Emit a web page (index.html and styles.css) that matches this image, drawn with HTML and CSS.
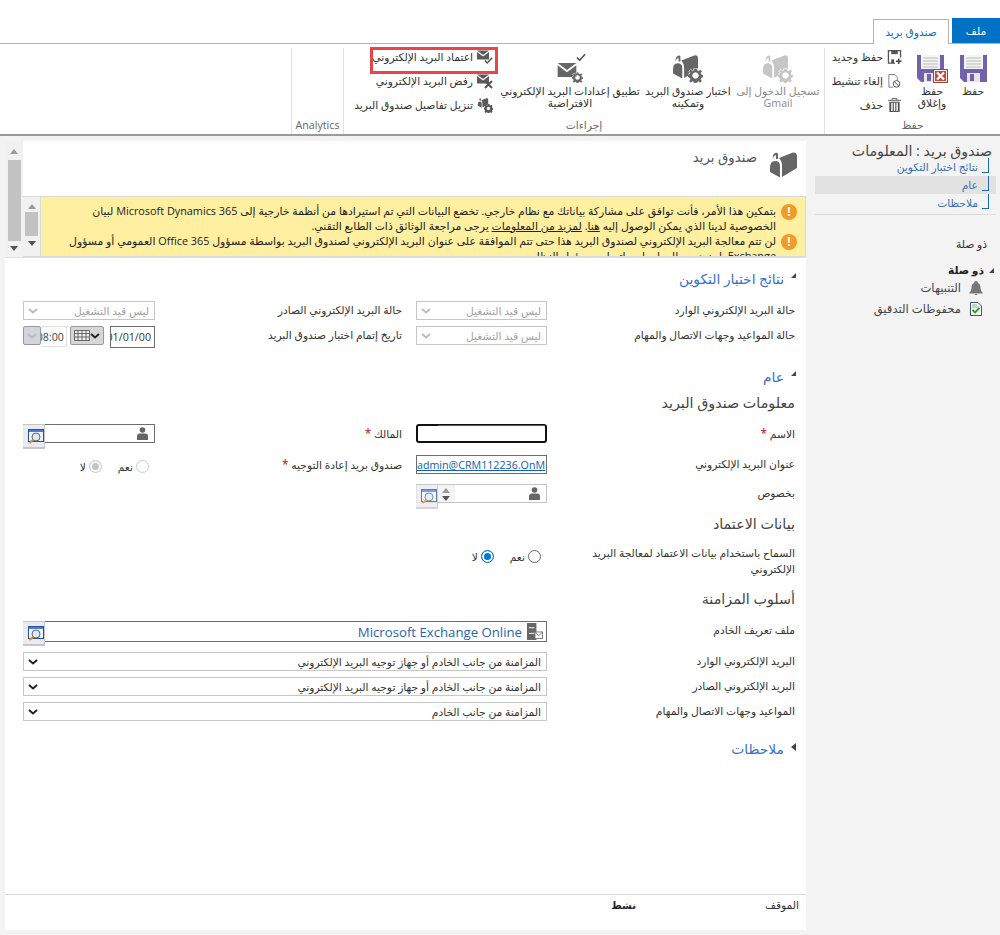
FILE: index.html
```html
<!DOCTYPE html>
<html lang="ar" dir="rtl">
<head>
    <meta charset="UTF-8">
    <title>صندوق بريد</title>
    <link rel="stylesheet" href="styles.css">
</head>
<body>
    <svg class="defs" width="0" height="0">
        <symbol id="mailbox" viewBox="0 0 27 26">
            <path d="M9 6 L23 .5 Q27 0 27 4 V16 L12 25 V14 Q12 9 9 6z"/>
            <path d="M0 16 Q0 9 5 9 Q10 9 10 14 V25.500 L0 20z"/>
            <path d="M5 1 Q8 0 8 2 V7 H6 V3 Q3 4 3 7 Q2 3 5 1z"/>
        </symbol>
        <symbol id="gear" viewBox="0 0 16 16">
            <path d="M6.500 0h3l.4 2.200 1.400.6L13.200 1.500l2 2-1.300 1.900.6 1.400 2.200.4v3l-2.200.4-.6 1.400 1.300 1.900-2 2-1.900-1.300-1.400.6-.4 2.200h-3l-.4-2.200-1.400-.6-1.900 1.300-2-2 1.300-1.900-.6-1.400L-.700 9.700v-3l2.200-.4.6-1.400L.800 3.500l2-2 1.900 1.300 1.400-.6z M8 5a3 3 0 1 0 .01 0z" fill-rule="evenodd"/>
        </symbol>
        <symbol id="floppy" viewBox="0 0 27 27">
            <path d="M0 0H27V27H4L0 23z" fill="#7262ac"/>
            <rect x="4" y="0" width="19" height="14" fill="#f4f4f4"/>
            <path d="M6 3h15M6 6h15M6 9h15M6 12h15" stroke="#bbb"/>
            <rect x="7" y="18" width="13" height="9" fill="#e6e6e6"/>
            <rect x="10" y="19" width="4" height="7" fill="#7262ac"/>
        </symbol>
        <symbol id="lookup" viewBox="0 0 16 15">
            <rect x=".5" y=".5" width="15" height="12" fill="#eef2fa" stroke="#2c4f94"/>
            <rect x="1" y="1" width="14" height="2" fill="#4a7bd8"/>
            <circle cx="8" cy="8" r="4" fill="#dfeaf4" stroke="#5b6b76"/>
            <path d="M5.500 10.500 L1.500 14" stroke="#d9902a" stroke-width="2"/>
        </symbol>
        <symbol id="person" viewBox="0 0 11 13">
            <circle cx="5.500" cy="3" r="2.800"/>
            <path d="M0 13V9Q0 6.500 3 6.500H8Q11 6.500 11 9V13z"/>
        </symbol>
        <symbol id="chev" viewBox="0 0 10 6">
            <path d="M1 1 L5 4.500 L9 1" fill="none" stroke="currentColor" stroke-width="2"/>
        </symbol>
        <symbol id="envelope" viewBox="0 0 16 12">
            <path d="M0 0H16L8 6z"/>
            <path d="M0 2V12H16V2L8 8z"/>
        </symbol>
    </svg>

    <header class="top">
        <div class="tabs">
            <div class="tab tab-file">ملف</div>
            <div class="tab tab-active">صندوق بريد</div>
        </div>
        <div class="ribbon">
            <section class="group group-save">
                <div class="group-body">
                    <div class="big big-save">
                        <span class="close-wrap">
                            <svg class="ico-floppy"><use href="#floppy"/></svg>
                        </span>
                        <span>حفظ</span>
                    </div>
                    <div class="big big-close">
                        <span class="close-wrap">
                            <svg class="ico-floppy"><use href="#floppy"/></svg>
                            <svg class="ico-x" viewBox="0 0 15 14"><rect x=".5" y=".5" width="14" height="13" fill="#f2f2f2" stroke="#8c4a3c"/><rect x="2" y="2" width="11" height="10" fill="#c9483a"/><path d="M4 3.500 L11 10.500 M11 3.500 L4 10.500" stroke="#fff" stroke-width="2.200"/></svg>
                        </span>
                        <span>حفظ<br>وإغلاق</span>
                    </div>
                    <div class="small-col small-col-save">
                        <div class="small">
                            <svg class="ico-small" viewBox="0 0 15 15"><path d="M8 14H1V.7H14V8" fill="none" stroke="#555" stroke-width="1.400"/><rect x="4" y="1" width="7" height="3.500" fill="#555"/><rect x="4" y="10" width="3" height="4" fill="#555"/><path d="M12 9v6M9 12h6" stroke="#444" stroke-width="1.600"/></svg>
                            <span>حفظ وجديد</span>
                        </div>
                        <div class="small">
                            <svg class="ico-small" viewBox="0 0 15 17"><path d="M6 16H.7V.700H8L11 4V8" fill="none" stroke="#666"/><circle cx="10" cy="12" r="4" fill="#fff" stroke="#555" stroke-width="1.200"/><path d="M7.500 9.500 L12.500 14.500" stroke="#555" stroke-width="1.200"/></svg>
                            <span>إلغاء تنشيط</span>
                        </div>
                        <div class="small">
                            <svg class="ico-small" viewBox="0 0 14 15"><path d="M0 2.500H14M4.500 2V.5H9.500V2" stroke="#555" fill="none"/><path d="M1.500 4H12.500V15H1.500z M3.500 5V14H5V5z M6.300 5V14H7.800V5z M9 5V14H10.500V5z" fill="#555" fill-rule="evenodd"/></svg>
                            <span>حذف</span>
                        </div>
                    </div>
                </div>
                <div class="group-name">حفظ</div>
            </section>

            <section class="group group-actions">
                <div class="group-body">
                    <div class="big big-gmail is-off">
                        <span class="mail-wrap">
                            <svg class="ico-mailbox"><use href="#mailbox"/></svg>
                            <svg class="ico-gear"><use href="#gear"/></svg>
                        </span>
                        <span>تسجيل الدخول إلى Gmail</span>
                    </div>
                    <div class="big big-test">
                        <span class="mail-wrap">
                            <svg class="ico-mailbox"><use href="#mailbox"/></svg>
                            <svg class="ico-gear"><use href="#gear"/></svg>
                        </span>
                        <span>اختبار صندوق البريد وتمكينه</span>
                    </div>
                    <div class="big big-apply">
                        <span class="apply-wrap">
                            <svg class="ico-env"><use href="#envelope"/></svg>
                            <svg class="ico-gear"><use href="#gear"/></svg>
                            <svg class="ico-tick" viewBox="0 0 11 9"><path d="M1 4.500 L4 7.500 L10 1" fill="none" stroke="#555" stroke-width="1.800"/></svg>
                        </span>
                        <span>تطبيق إعدادات البريد الإلكتروني<br>الافتراضية</span>
                    </div>
                    <div class="small-col small-col-mail">
                        <div class="small small-marked">
                            <span class="env-small">
                                <svg class="ico-small"><use href="#envelope"/></svg>
                                <svg class="ico-mini" viewBox="0 0 11 9"><path d="M1 4.500 L4 7.500 L10 1" fill="none" stroke="#555" stroke-width="1.800"/></svg>
                            </span>
                            <span>اعتماد البريد الإلكتروني</span>
                        </div>
                        <div class="small">
                            <span class="env-small">
                                <svg class="ico-small"><use href="#envelope"/></svg>
                                <svg class="ico-mini" viewBox="0 0 9 9"><path d="M1 1 L8 8 M8 1 L1 8" stroke="#555" stroke-width="2"/></svg>
                            </span>
                            <span>رفض البريد الإلكتروني</span>
                        </div>
                        <div class="small">
                            <span class="env-small">
                                <svg class="ico-small"><use href="#mailbox"/></svg>
                                <svg class="ico-mini"><use href="#gear"/></svg>
                            </span>
                            <span>تنزيل تفاصيل صندوق البريد</span>
                        </div>
                    </div>
                </div>
                <div class="group-name">إجراءات</div>
            </section>

            <section class="group group-analytics">
                <div class="group-body"></div>
                <div class="group-name">Analytics</div>
            </section>
        </div>
    </header>

    <div class="page">
        <aside class="side">
            <div class="side-title">صندوق بريد : المعلومات</div>
            <ul class="side-tree">
                <li>نتائج اختبار التكوين</li>
                <li class="current">عام</li>
                <li>ملاحظات</li>
            </ul>
            <div class="side-rule"></div>
            <div class="side-plain">ذو صلة</div>
            <div class="side-head"><i class="tri"></i>ذو صلة</div>
            <div class="side-item">
                <svg class="side-ico" viewBox="0 0 14 14"><path d="M7 0Q9 0 9 2Q11.500 3 11.500 7Q11.500 10 13.500 11.500V12.500H.5V11.500Q2.500 10 2.500 7Q2.500 3 5 2Q5 0 7 0z M5.500 13H8.500Q8 14 7 14Q6 14 5.500 13z" fill="#777"/></svg>
                <span>التنبيهات</span>
            </div>
            <div class="side-item">
                <svg class="side-ico" viewBox="0 0 14 14"><path d="M1.500.5H9L12.500 4V13.500H1.500z" fill="#fbfbf4" stroke="#3c5a78"/><path d="M3 3h5M3 5h7" stroke="#8aa"/><path d="M3.500 8 L6 10.500 L10.500 6" fill="none" stroke="#2d9a2d" stroke-width="1.800"/></svg>
                <span>محفوظات التدقيق</span>
            </div>
        </aside>

        <main class="panel">
            <div class="panel-top">
                <div class="scroll-outer">
                    <i class="arr arr-up"></i>
                    <b class="thumb thumb-outer"></b>
                    <i class="arr arr-down"></i>
                </div>
                <div class="panel-head">
                    <div class="entity">
                        <svg class="ico-entity"><use href="#mailbox"/></svg>
                        <span>صندوق بريد</span>
                    </div>
                    <div class="notice">
                        <div class="notice-text">
                            <div class="notice-item">
                                <i class="warn">!</i>
                                <p>بتمكين هذا الأمر، فأنت توافق على مشاركة بياناتك مع نظام خارجي. تخضع البيانات التي تم استيرادها من أنظمة خارجية إلى Microsoft Dynamics 365 لبيان<br>الخصوصية لدينا الذي يمكن الوصول إليه <u>هنا</u>. <u>لمزيد من المعلومات</u> يرجى مراجعة الوثائق ذات الطابع التقني.</p>
                            </div>
                            <div class="notice-item">
                                <i class="warn">!</i>
                                <p>لن تتم معالجة البريد الإلكتروني لصندوق البريد هذا حتى تتم الموافقة على عنوان البريد الإلكتروني لصندوق البريد بواسطة مسؤول Office 365 العمومي أو مسؤول<br>Exchange. لمزيد من المعلومات، اتصل بمسؤول النظام.</p>
                            </div>
                        </div>
                        <div class="scroll-inner">
                            <i class="arr arr-up"></i>
                            <b class="thumb thumb-inner"></b>
                            <i class="arr arr-down"></i>
                        </div>
                    </div>
                </div>
            </div>

            <div class="form">
                <h2 class="sec sec-test"><i class="tri"></i>نتائج اختبار التكوين</h2>
                <div class="row row-test">
                    <label>حالة البريد الإلكتروني الوارد</label>
                    <div class="ctl ctl-off"><span>ليس قيد التشغيل</span><svg class="chev"><use href="#chev"/></svg></div>
                    <label>حالة البريد الإلكتروني الصادر</label>
                    <div class="ctl ctl-off"><span>ليس قيد التشغيل</span><svg class="chev"><use href="#chev"/></svg></div>
                </div>
                <div class="row row-test">
                    <label>حالة المواعيد وجهات الاتصال والمهام</label>
                    <div class="ctl ctl-off"><span>ليس قيد التشغيل</span><svg class="chev"><use href="#chev"/></svg></div>
                    <label>تاريخ إتمام اختبار صندوق البريد</label>
                    <div class="date">
                        <div class="date-day"><span>01/01/00</span></div>
                        <div class="date-cal">
                            <svg class="chev chev-dark"><use href="#chev"/></svg>
                            <svg class="cal-ico" viewBox="0 0 16 11"><path d="M.5.5H15.500V10.500H.5z M.5 3.500H15.500M.5 7H15.500M4 .5V10.500M8 .5V10.500M12 .5V10.500" fill="#eee" stroke="#666"/></svg>
                        </div>
                        <div class="date-time"><span>08:00</span></div>
                        <div class="date-arrow"><svg class="chev"><use href="#chev"/></svg></div>
                    </div>
                </div>

                <h2 class="sec sec-general"><i class="tri"></i>عام</h2>
                <h3 class="sub sub-first">معلومات صندوق البريد</h3>
                <div class="row">
                    <label>الاسم <em>*</em></label>
                    <div class="ctl ctl-focus"></div>
                    <label>المالك <em>*</em></label>
                    <div class="ctl ctl-dark ctl-look">
                        <svg class="person"><use href="#person"/></svg>
                        <span class="look"><svg class="look-ico"><use href="#lookup"/></svg></span>
                    </div>
                </div>
                <div class="row row-mail">
                    <label>عنوان البريد الإلكتروني</label>
                    <div class="ctl ctl-dark ctl-mail"><span>admin@CRM112236.OnM</span></div>
                    <label>صندوق بريد إعادة التوجيه <em>*</em></label>
                    <div class="radios radios-off">
                        <span class="radio-opt"><i class="radio"></i>نعم</span>
                        <span class="radio-opt"><i class="radio radio-on"></i>لا</span>
                    </div>
                </div>
                <div class="row row-regard">
                    <label>بخصوص</label>
                    <div class="ctl ctl-look">
                        <svg class="person"><use href="#person"/></svg>
                        <span class="spin"><i class="arr arr-up"></i><i class="arr arr-down"></i></span>
                        <span class="look look-pale"><svg class="look-ico"><use href="#lookup"/></svg></span>
                    </div>
                </div>

                <h3 class="sub sub-cred">بيانات الاعتماد</h3>
                <div class="row row-cred">
                    <label>السماح باستخدام بيانات الاعتماد لمعالجة البريد الإلكتروني</label>
                    <div class="radios">
                        <span class="radio-opt"><i class="radio"></i>نعم</span>
                        <span class="radio-opt"><i class="radio radio-on"></i>لا</span>
                    </div>
                </div>

                <h3 class="sub sub-sync">أسلوب المزامنة</h3>
                <div class="row row-wide row-profile">
                    <label>ملف تعريف الخادم</label>
                    <div class="ctl ctl-dark ctl-profile">
                        <svg class="srv-ico" viewBox="0 0 17 18"><rect width="10" height="18" fill="#666"/><path d="M2 5h6M2 11h6" stroke="#fff"/><rect x="8.500" y="9.500" width="8" height="7" fill="#fff" stroke="#777"/><path d="M9 10 L12.500 13.500 L16 10" fill="none" stroke="#777"/></svg>
                        <span>Microsoft Exchange Online</span>
                        <span class="look"><svg class="look-ico"><use href="#lookup"/></svg></span>
                    </div>
                </div>
                <div class="row row-wide row-sync">
                    <label>البريد الإلكتروني الوارد</label>
                    <div class="ctl"><span>المزامنة من جانب الخادم أو جهاز توجيه البريد الإلكتروني</span><svg class="chev chev-dark"><use href="#chev"/></svg></div>
                </div>
                <div class="row row-wide row-sync">
                    <label>البريد الإلكتروني الصادر</label>
                    <div class="ctl"><span>المزامنة من جانب الخادم أو جهاز توجيه البريد الإلكتروني</span><svg class="chev chev-dark"><use href="#chev"/></svg></div>
                </div>
                <div class="row row-wide row-sync">
                    <label>المواعيد وجهات الاتصال والمهام</label>
                    <div class="ctl"><span>المزامنة من جانب الخادم</span><svg class="chev chev-dark"><use href="#chev"/></svg></div>
                </div>

                <h2 class="sec sec-notes"><i class="tri tri-closed"></i>ملاحظات</h2>
            </div>

            <footer class="status">
                <span class="status-label">الموقف</span>
                <span class="status-value">نشط</span>
            </footer>
        </main>
    </div>
</body>
</html>
```

FILE: styles.css
```css
* {
    box-sizing: border-box;
}

html, body {
    margin: 0;
    height: 100%;
}

body {
    width: 1000px;
    height: 935px;
    overflow: hidden;
    display: flex;
    flex-direction: column;
    background: #f3f3f3;
    color: #333;
    font-family: "Open Sans", "DejaVu Sans", sans-serif;
    font-size: 10.700px;
    direction: rtl;
}

.defs {
    position: absolute;
}

/* ribbon */
.top {
    background: #fff;
    height: 136px;
    flex: none;
}

.tabs {
    height: 44px;
    padding-top: 19px;
    display: flex;
    align-items: flex-end;
    gap: 3px;
    border-bottom: 1px solid #b4b4b4;
}

.tab {
    height: 25px;
    display: flex;
    align-items: center;
    justify-content: center;
}

.tab-file {
    width: 48px;
    background: #0072c6;
    color: #fff;
}

.tab-active {
    width: 76px;
    height: 25px;
    margin-bottom: -1px;
    background: #fff;
    color: #0072c6;
    border: 1px solid #b4b4b4;
    border-bottom: 0;
}

.ribbon {
    height: 92px;
    display: flex;
    border-bottom: 2px solid #9a9a9a;
}

.group {
    position: relative;
    display: flex;
    flex-direction: column;
    height: 86px;
    margin-top: 4px;
    border-left: 1px solid #e2e2e2;
}

.group-save {
    width: 176px;
}

.group-actions {
    width: 481px;
}

.group-analytics {
    width: 52px;
}

.group-body {
    flex: 1;
    min-height: 0;
    display: flex;
    align-items: flex-start;
}

.group-name {
    height: 17px;
    text-align: center;
    color: #666;
    line-height: 16px;
}

.big {
    display: flex;
    flex-direction: column;
    align-items: center;
    text-align: center;
    line-height: 12px;
    padding-top: 7px;
}

.big > span:last-child {
    margin-top: 2px;
}

.big-save {
    width: 40px;
    margin-right: 7px;
}

.big-close {
    width: 46px;
    margin-right: -2px;
}

.close-wrap {
    position: relative;
    display: block;
    width: 31px;
    height: 28px;
}

.ico-floppy {
    position: absolute;
    left: 0;
    top: 0;
    width: 27px;
    height: 27px;
}

.big-save .close-wrap {
    width: 27px;
}

.ico-x {
    position: absolute;
    right: 0;
    bottom: 0;
    width: 15px;
    height: 14px;
}

.small-col {
    display: flex;
    flex-direction: column;
    align-items: flex-start;
    margin-top: -3px;
}

.small-col-save {
    margin-right: 7px;
}

.small {
    height: 24px;
    display: flex;
    align-items: center;
    gap: 4px;
    white-space: nowrap;
    color: #333;
}

.ico-small {
    width: 15px;
    height: 14px;
    fill: #5a5a5a;
    flex: none;
}

.env-small {
    position: relative;
    width: 15px;
    height: 14px;
    flex: none;
    display: block;
}

.env-small .ico-small {
    position: absolute;
    left: 0;
    top: 0;
    width: 12px;
    height: 10px;
}

.ico-mini {
    position: absolute;
    right: -1px;
    bottom: -1px;
    width: 9px;
    height: 9px;
    fill: #555;
}

.small-marked {
    position: relative;
}

.small-marked::after {
    content: "";
    position: absolute;
    left: -2px;
    right: -6px;
    top: 2px;
    height: 21px;
    border: 3px solid #e9444a;
}

.mail-wrap {
    position: relative;
    display: block;
    width: 30px;
    height: 28px;
    margin-top: -1px;
    margin-bottom: 1px;
}

.ico-mailbox {
    position: absolute;
    left: 0;
    top: 0;
    width: 25px;
    height: 26px;
    fill: #666;
}

.ico-gear {
    position: absolute;
    right: 0;
    bottom: -1px;
    width: 15px;
    height: 15px;
    fill: #666;
    stroke: #fff;
    stroke-width: .8px;
    overflow: visible;
}

.big-gmail {
    width: 90px;
    margin-right: 1px;
}

.is-off {
    color: #8a8a8a;
}

.is-off .ico-mailbox,
.is-off .ico-gear {
    fill: #c6c6c6;
}

.big-test {
    width: 90px;
}

.big-apply {
    width: 138px;
    margin-right: 4px;
    white-space: nowrap;
}

.apply-wrap {
    position: relative;
    display: block;
    width: 30px;
    height: 28px;
}

.ico-env {
    position: absolute;
    left: 2px;
    top: 8px;
    width: 20px;
    height: 14px;
    fill: #666;
}

.apply-wrap .ico-gear {
    right: 2px;
    width: 11px;
    height: 11px;
    bottom: 0;
}

.ico-tick {
    position: absolute;
    right: -1px;
    top: -2px;
    width: 10px;
    height: 9px;
}

.small-col-mail {
    margin-right: 9px;
}

/* page */
.page {
    flex: 1;
    display: flex;
    padding-top: 5px;
    min-height: 0;
}

.side {
    width: 194px;
    flex: none;
    padding-top: 3px;
}

.side-title {
    font-size: 14.200px;
    line-height: 14px;
    color: #444;
    padding-right: 8px;
    white-space: nowrap;
}

.side-tree {
    list-style: none;
    margin: 0;
    padding: 0;
    width: 181px;
    margin-right: 4px;
}

.side-tree li {
    position: relative;
    height: 18px;
    line-height: 18px;
    padding-right: 18px;
    color: #3b6fb5;
}

.side-tree li::after {
    content: "";
    position: absolute;
    right: 7px;
    top: 0;
    width: 6px;
    height: 14px;
    border-right: 1px solid #1f6ab0;
    border-bottom: 1px solid #1f6ab0;
}

.side-tree .current {
    background: #e2e2e2;
}

.side-rule {
    width: 181px;
    margin-right: 4px;
    margin-top: 2px;
    border-top: 1px solid #dcdcdc;
}

.side-plain {
    margin-top: 21px;
    padding-right: 13px;
    line-height: 16px;
}

.side-head {
    margin-top: 10px;
    display: flex;
    align-items: center;
    gap: 5px;
    padding-right: 6px;
    font-weight: 700;
    line-height: 16px;
    color: #222;
}

.tri {
    display: block;
    flex: none;
    width: 0;
    height: 0;
    border-top: 5px solid transparent;
    border-right: 5px solid #444;
}

.tri-closed {
    border-top: 4px solid transparent;
    border-bottom: 4px solid transparent;
    border-right: 0;
    border-left: 5px solid #444;
    transform: scaleX(-1);
}

.side-item {
    height: 21px;
    display: flex;
    align-items: center;
    gap: 8px;
    padding-right: 17px;
    font-size: 11.600px;
    color: #444;
}

.side-head + .side-item {
    margin-top: -1px;
}

.side-ico {
    width: 14px;
    height: 14px;
    flex: none;
}

.panel {
    width: 801px;
    height: 789px;
    background: #fff;
    display: flex;
    flex-direction: column;
}

.panel-top {
    height: 117px;
    flex: none;
    display: flex;
    flex-direction: row-reverse;
    border-bottom: 1px solid #e0e0e0;
}

.scroll-outer {
    width: 18px;
    padding: 1px 2px 0;
    background: #f1f1f1;
    display: flex;
    flex-direction: column;
    align-items: center;
    justify-content: space-between;
    flex: none;
}

.scroll-inner {
    width: 18px;
    padding: 7px 1px 3px;
    background: #f1f1f1;
    border-right: 1px solid #ddd;
    display: flex;
    flex-direction: column;
    align-items: center;
    flex: none;
}

.thumb {
    display: block;
    background: #c2c2c2;
}

.thumb-outer {
    width: 13px;
    height: 81px;
}

.thumb-inner {
    width: 13px;
    height: 24px;
    margin: 3px 0 5px;
}

.arr {
    display: block;
    width: 0;
    height: 0;
    border-left: 4px solid transparent;
    border-right: 4px solid transparent;
}

.arr-up {
    border-bottom: 5px solid #9a9a9a;
}

.arr-down {
    border-top: 5px solid #555;
}

.scroll-outer .arr-up {
    margin-top: 7px;
}

.scroll-outer .arr-down {
    margin-bottom: 6px;
}

.panel-head {
    flex: 1;
    min-width: 0;
    display: flex;
    flex-direction: column;
}

.entity {
    height: 55px;
    display: flex;
    align-items: flex-start;
    gap: 13px;
    padding: 11px 9px 0 0;
    font-size: 13.300px;
    color: #555;
}

.entity span {
    margin-top: -4px;
}

.ico-entity {
    width: 27px;
    height: 26px;
    fill: #666;
    flex: none;
}

.notice {
    height: 62px;
    display: flex;
    background: #ffefa0;
    border: 1px solid #d8d8d8;
    border-left: 0;
    overflow: hidden;
}

.notice-text {
    flex: 1;
    min-width: 0;
    padding: 6px 8px 0 0;
    line-height: 15px;
    color: #222;
    font-size: 10.850px;
    white-space: nowrap;
}

.notice-item {
    display: flex;
    gap: 5px;
}

.notice-item p {
    margin: 0;
}

.warn {
    flex: none;
    width: 16px;
    height: 16px;
    border-radius: 50%;
    background: #f09a2a;
    color: #fff;
    font-style: normal;
    font-weight: 700;
    font-size: 12px;
    line-height: 16px;
    text-align: center;
    margin-top: 1px;
}

/* form */
.form {
    flex: 1;
    padding-right: 11px;
    padding-left: 18px;
    min-height: 0;
}

.sec {
    margin: 0;
    display: flex;
    align-items: flex-start;
    gap: 7px;
    font-size: 13.800px;
    line-height: 20px;
    font-weight: 400;
    color: #3b6fc9;
}

.sec .tri {
    margin-top: 4px;
    margin-right: -1px;
}

.sec-test {
    margin-top: 11px;
}

.sec-general {
    margin-top: 22px;
}

.sec-notes {
    margin-top: 18px;
}

.sub {
    margin: 0;
    font-size: 14.300px;
    line-height: 20px;
    font-weight: 400;
    color: #444;
}

.sub-first {
    margin-top: 6px;
}

.sub-cred {
    margin-top: 11px;
}

.sub-sync {
    margin-top: 12px;
}

.row {
    display: grid;
    grid-template-columns: 248px 131px 261px 132px;
    align-items: start;
    height: 19px;
    margin-top: 11px;
}

.row label {
    line-height: 19px;
    color: #333;
    white-space: nowrap;
}

.row label:nth-of-type(2) {
    padding-right: 14px;
}

label em {
    color: #c00;
    font-style: normal;
    font-size: 12px;
}

.row-test {
    margin-top: 6px;
}

.sec-test + .row-test {
    margin-top: 12px;
}

.row-mail {
    margin-top: 12px;
}

.row-regard {
    margin-top: 10px;
}

.row-cred {
    margin-top: 11px;
    height: 32px;
}

.row-cred label {
    white-space: normal;
    line-height: 16px;
    padding-left: 30px;
}

.row-cred .radios {
    grid-column: span 3;
    padding-right: 6px;
}

.row-wide {
    grid-template-columns: 248px 524px;
}

.row-profile {
    margin-top: 12px;
    height: 21px;
}

.row-sync {
    margin-top: 6px;
}

.row-profile + .row-sync {
    margin-top: 10px;
}

.ctl {
    position: relative;
    height: 19px;
    display: flex;
    align-items: center;
    justify-content: space-between;
    padding: 0 5px 0 4px;
    border: 1px solid #c6c6c6;
    background: #fff;
    white-space: nowrap;
    color: #333;
}

.ctl-off {
    color: #a2a2a2;
}

.chev {
    width: 10px;
    height: 6px;
    color: #bbb;
    flex: none;
}

.chev-dark {
    color: #222;
}

.ctl-dark {
    border-color: #6e6e6e;
}

.ctl-focus {
    border: 2px solid #111;
    border-radius: 3px;
}

.ctl-focus::before {
    content: "";
    position: absolute;
    left: 20px;
    right: 0;
    top: -1px;
    border-top: 1px solid #0072c6;
}

.ctl-mail {
    padding: 0;
    direction: ltr;
    justify-content: flex-start;
    overflow: hidden;
    font-size: 10.700px;
    color: #1160b7;
}

.ctl-mail span {
    text-decoration: underline;
}

.ctl-look {
    justify-content: flex-start;
    gap: 8px;
}

.person {
    width: 11px;
    height: 13px;
    fill: #666;
    margin-right: 1px;
}

.look {
    position: absolute;
    left: -1px;
    top: -1px;
    width: 22px;
    height: 25px;
    background: #eaeaf0;
    border: 1px solid #c6c6c6;
    border-width: 1px 1px 2px 0;
    display: flex;
    padding: 4px 0 0 5px;
}

.look-pale {
    opacity: .75;
}

.look-ico {
    width: 16px;
    height: 15px;
}

.spin {
    position: absolute;
    left: 20px;
    top: 0;
    height: 17px;
    padding: 3px 5px 0;
    background: #f4f4f4;
    display: flex;
    flex-direction: column;
    gap: 3px;
}

.date {
    display: flex;
    height: 22px;
    align-items: flex-start;
}

.date-day {
    width: 45px;
    height: 22px;
    padding-right: 3px;
    border: 1px solid #6e6e6e;
    overflow: hidden;
    direction: ltr;
    display: flex;
    align-items: center;
    justify-content: flex-end;
    font-size: 10.700px;
    color: #333;
    flex: none;
}

.date-cal {
    width: 34px;
    height: 19px;
    margin-right: 6px;
    background: #d6d6d6;
    border: 1px solid #999;
    border-radius: 2px;
    display: flex;
    direction: ltr;
    align-items: center;
    justify-content: space-between;
    padding: 0 3px;
    flex-direction: row-reverse;
    flex: none;
}

.cal-ico {
    width: 16px;
    height: 11px;
}

.date-time {
    width: 26px;
    height: 21px;
    margin-right: 3px;
    padding-right: 2px;
    border: 1px solid #e0e0e0;
    border-left: 0;
    direction: ltr;
    display: flex;
    justify-content: flex-end;
    line-height: 20px;
    font-size: 10.700px;
    overflow: hidden;
    color: #444;
    flex: none;
}

.date-arrow {
    width: 18px;
    height: 19px;
    background: #d4d4de;
    border: 1px solid #999;
    border-radius: 2px;
    display: flex;
    align-items: center;
    justify-content: center;
    flex: none;
}

.radios {
    display: flex;
    gap: 16px;
    padding-right: 6px;
    align-items: center;
    height: 19px;
    margin-top: 2px;
}

.radio-opt {
    display: flex;
    align-items: center;
    gap: 3px;
    color: #333;
}

.radio {
    display: block;
    width: 13px;
    height: 13px;
    border: 1px solid #666;
    border-radius: 50%;
    background: #fff;
}

.radio-on {
    border-color: #0072c6;
    background: #0078d7;
    box-shadow: inset 0 0 0 2px #fff;
}

.radios-off .radio {
    border-color: #ccc;
}

.radios-off .radio-on {
    background: #c4c4c4;
    border-color: #ccc;
}

.ctl-profile {
    height: 21px;
    justify-content: flex-start;
    gap: 5px;
    padding-right: 3px;
}

.ctl-profile > span:first-of-type {
    font-size: 13.200px;
    color: #2f5fb5;
}

.srv-ico {
    width: 16px;
    height: 17px;
    flex: none;
}

.status {
    height: 36px;
    flex: none;
    border-top: 1px solid #d8d8d8;
    display: flex;
    padding: 2px 7px 0 0;
    align-items: flex-start;
    line-height: 17px;
}

.status-label {
    width: 163px;
}

.status-value {
    font-weight: 700;
    font-size: 10px;
    color: #222;
}
```
